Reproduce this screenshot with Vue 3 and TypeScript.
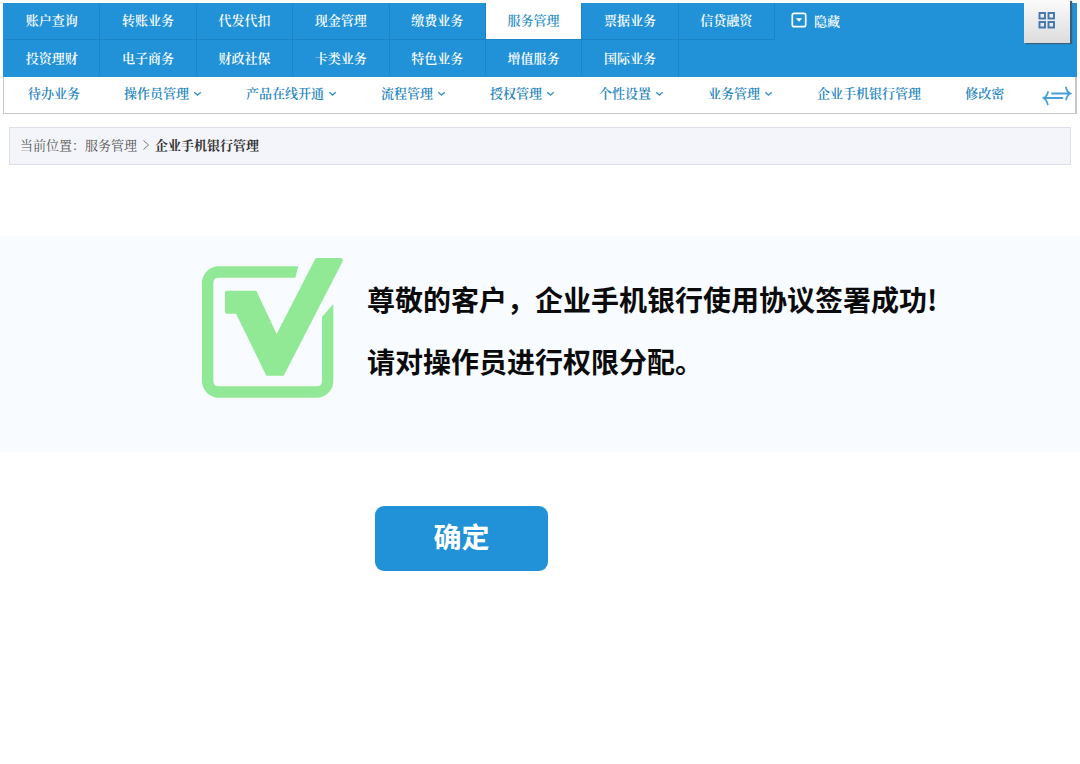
<script setup lang="ts">
interface SubItem {
  label: string
  menu: boolean
}

const firstRow: string[] = ['账户查询', '转账业务', '代发代扣', '现金管理', '缴费业务', '服务管理', '票据业务', '信贷融资']
const secondRow: string[] = ['投资理财', '电子商务', '财政社保', '卡类业务', '特色业务', '增值服务', '国际业务']
const active = '服务管理'

const subItems: SubItem[] = [
  { label: '待办业务', menu: false },
  { label: '操作员管理', menu: true },
  { label: '产品在线开通', menu: true },
  { label: '流程管理', menu: true },
  { label: '授权管理', menu: true },
  { label: '个性设置', menu: true },
  { label: '业务管理', menu: true },
  { label: '企业手机银行管理', menu: false },
  { label: '修改密', menu: false },
]
</script>

<template>
  <div class="page">
    <header class="header">
      <nav class="main-nav" aria-label="主菜单">
        <div class="nav-row">
          <a v-for="item in firstRow" :key="item" href="#" class="nav-link" :class="{ active: item === active }">{{ item }}</a>
          <button type="button" class="hide-button">
            <svg width="16" height="16" viewBox="0 0 16 16" aria-hidden="true">
              <rect x="1.3" y="1.3" width="13.4" height="13.4" rx="2" fill="none" stroke="#fff" stroke-width="1.7" />
              <path d="M4.8 6.2h6.4L8 9.8z" fill="#fff" />
            </svg>
            <span>隐藏</span>
          </button>
        </div>
        <div class="nav-row">
          <a v-for="item in secondRow" :key="item" href="#" class="nav-link">{{ item }}</a>
        </div>
      </nav>
      <nav class="sub-nav" aria-label="子菜单">
        <div class="sub-links">
          <a v-for="item in subItems" :key="item.label" href="#" class="sub-link">
            <span>{{ item.label }}</span>
            <svg v-if="item.menu" width="9" height="8" viewBox="0 0 9 8" aria-hidden="true">
              <path d="M1.2 3.2l3.3 2.8 3.3-2.8" fill="none" stroke="#3a94c6" stroke-width="1.4" />
            </svg>
          </a>
        </div>
        <button type="button" class="swap-button" aria-label="切换菜单">
          <svg width="30" height="20" viewBox="0 0 30 20" fill="none" stroke="#4a9fd6" stroke-width="1.8" stroke-linecap="round" aria-hidden="true">
            <path d="M10 7.5H28M24 1.5C24.6 4.5 26 6.5 28.5 7.5C26 8.6 24.8 10.5 24.2 13.5" />
            <path d="M20.500 12H2M6 6C5.200 9 4 11 1.500 12C3.800 13.200 5 15.200 5.800 18.500" />
          </svg>
        </button>
      </nav>
      <button type="button" class="apps-button" aria-label="全部功能">
        <svg width="18" height="17" viewBox="0 0 18 17" fill="none" stroke="#3f76ac" stroke-width="1.9" aria-hidden="true">
          <rect x="1.5" y="1" width="5.5" height="5.5" />
          <rect x="10.5" y="1" width="5.5" height="5.5" />
          <rect x="1.5" y="10" width="5.5" height="5.5" />
          <rect x="10.5" y="10" width="5.5" height="5.5" />
        </svg>
      </button>
    </header>

    <nav class="breadcrumb" aria-label="当前位置">
      <span>当前位置：</span>
      <a href="#">服务管理</a>
      <svg width="8" height="12" viewBox="0 0 8 12" aria-hidden="true">
        <path d="M1.5 1.5L6.5 6l-5 4.5" fill="none" stroke="#777" stroke-width="1" />
      </svg>
      <strong>企业手机银行管理</strong>
    </nav>

    <main>
      <section class="result">
        <svg class="result-icon" width="141" height="140" viewBox="66 55 423 420" fill="#91e996" aria-hidden="true">
          <path d="M355 80H116A50 50 0 0 0 66 130V424A50 50 0 0 0 116 474H410A50 50 0 0 0 460 424V193L426 232V424Q426 440 410 440H116Q100 440 100 424V130Q100 114 116 114H346Z" />
          <path d="M140 153H229L290 283L405 59Q407 55 411 55H484Q490 57 487 67L311 408H259L168 222H141Q135 222 135 216V158Q135 153 140 153Z" />
        </svg>
        <div class="message">
          <p>尊敬的客户，企业手机银行使用协议签署成功!</p>
          <p>请对操作员进行权限分配。</p>
        </div>
      </section>
      <div class="actions">
        <button type="button" class="confirm">确定</button>
      </div>
    </main>
  </div>
</template>

<style>
body {
  margin: 0;
  background: #fff;
}
</style>

<style scoped>
.page {
  font-family: "Liberation Serif", "Noto Serif CJK SC", "Noto Sans CJK SC", serif;
  font-size: 13px;
  padding: 3px 3px 0;
}
a {
  color: inherit;
  text-decoration: none;
}
button {
  font: inherit;
  border: 0;
  padding: 0;
  background: none;
  cursor: pointer;
}
svg {
  display: block;
  flex: none;
}
.header {
  position: relative;
}
.main-nav {
  padding-left: 1px;
  background: #2192d7;
  color: #fff;
  font-weight: 600;
}
.nav-row {
  display: grid;
  grid-template-columns: repeat(8, 964fr) 3020fr;
  height: 37px;
}
.nav-link {
  display: flex;
  align-items: center;
  justify-content: center;
  box-sizing: border-box;
  padding-bottom: 3px;
  border-right: 1px solid #1b84c6;
  border-bottom: 1px solid #1b84c6;
  white-space: nowrap;
}
.nav-row:last-child .nav-link {
  padding-bottom: 1px;
  border-bottom-color: transparent;
}
.nav-link.active {
  background: #fff;
  background-clip: padding-box;
  color: #2d8fc6;
}
.hide-button {
  display: flex;
  align-items: center;
  gap: 7px;
  padding: 0 0 3px 16px;
  color: #fff;
}
.sub-nav {
  display: flex;
  align-items: center;
  justify-content: space-between;
  height: 36px;
  padding: 0 3px 0 24px;
  border: 1px solid #c4c7cb;
  border-top: 0;
  border-right-width: 2px;
  color: #2585be;
  font-weight: 600;
}
.sub-links {
  display: flex;
  gap: 44px;
}
.sub-link {
  display: flex;
  align-items: center;
  gap: 4px;
  padding-bottom: 5px;
  white-space: nowrap;
}
.swap-button {
  padding-top: 1px;
}
.apps-button {
  position: absolute;
  top: -3px;
  right: 7px;
  display: flex;
  align-items: center;
  justify-content: center;
  padding-bottom: 2px;
  width: 46px;
  height: 43px;
  background: linear-gradient(#fbfbfb, #dcdcdc);
  box-shadow: 2px 1px 1px #3a5f7c;
}
.breadcrumb {
  display: flex;
  align-items: center;
  box-sizing: border-box;
  height: 38px;
  margin: 13px 6px 0;
  padding: 0 0 3px 10px;
  border: 1px solid #dcdfe8;
  background: #f4f5fa;
  color: #555;
}
.breadcrumb svg {
  margin: 0 5px;
}
.breadcrumb strong {
  color: #333;
  font-weight: 700;
}
.result {
  display: flex;
  gap: 24px;
  box-sizing: border-box;
  min-height: 216px;
  margin: 71px -3px 0;
  padding: 22px 24px 0 202px;
  background: #f8fbff;
}
.message {
  padding-top: 10px;
  font-family: "Noto Sans CJK SC", sans-serif;
  font-size: 28px;
  font-weight: 700;
  line-height: 62px;
  color: #0b0b0b;
}
.message p {
  margin: 0;
}
.actions {
  padding: 54px 0 24px 372px;
}
.confirm {
  width: 173px;
  height: 65px;
  padding-bottom: 5px;
  border-radius: 9px;
  background: #2192d7;
  color: #fff;
  font-family: "Noto Sans CJK SC", sans-serif;
  font-size: 28px;
  font-weight: 700;
}
</style>
